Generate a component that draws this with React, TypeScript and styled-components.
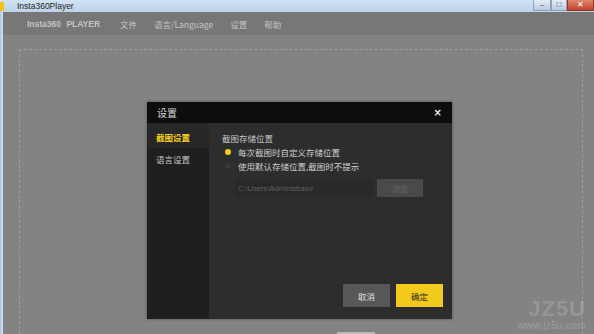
import React from "react";
import styled, { createGlobalStyle } from "styled-components";

const Global = createGlobalStyle`
  html, body { margin: 0; padding: 0; background: #838383; }
  body { font-family: "Noto Sans CJK SC", "Liberation Sans", sans-serif; }
  * { box-sizing: border-box; }
`;

const Screen = styled.div`
  width: 594px;
  height: 334px;
  display: flex;
  flex-direction: column;
  overflow: hidden;
  position: relative;
  background: #838383;
`;

const TitleBar = styled.div`
  height: 12px;
  display: flex;
  align-items: center;
  background: linear-gradient(#d3e3f3, #bcd2ea);
  font-family: "Liberation Sans", sans-serif;
  font-size: 8.5px;
  color: #1d1d1d;
`;

const AppIcon = styled.div`
  width: 4px;
  height: 9px;
  background: #f3c417;
  margin-right: 13px;
`;

const TitleText = styled.span`
  flex: 1;
  line-height: 12px;
`;

const WinBtn = styled.div<{ $close?: boolean; $w: number }>`
  width: ${(p) => p.$w}px;
  height: 11px;
  align-self: flex-start;
  background: ${(p) => (p.$close ? "linear-gradient(#e0866f, #c2432f)" : "linear-gradient(#e5edf6, #b9cbe0)")};
  border: 1px solid ${(p) => (p.$close ? "#9a3526" : "#8ea2bb")};
  border-top: none;
  display: flex;
  align-items: center;
  justify-content: center;
  color: ${(p) => (p.$close ? "#fff" : "#445")};
  font-size: 8px;
  line-height: 1;
`;

const Frame = styled.div`
  flex: 1;
  display: flex;
`;

const WinBorder = styled.div`
  width: 3px;
  background: linear-gradient(90deg, #a9c4e2, #d6e5f4);
`;

const AppArea = styled.div`
  flex: 1;
  display: flex;
  flex-direction: column;
`;

const MenuBar = styled.div`
  height: 23px;
  background: #777777;
  display: flex;
  align-items: center;
  padding-left: 24px;
  color: #c4c4c4;
  font-size: 8.5px;
`;

const Brand = styled.span`
  font-family: "Liberation Sans", sans-serif;
  font-weight: bold;
  margin-right: 20px;
  word-spacing: 3px;
`;

const MenuItem = styled.span`
  margin-right: 17px;
`;

const Stage = styled.div`
  flex: 1;
  padding: 14px 11px 0 16px;
  display: flex;
  background: #838383;
`;

const DashedArea = styled.div`
  flex: 1;
  border: 1px dashed #9d9d9d;
  border-bottom: none;
`;

const BottomTab = styled.div`
  position: absolute;
  left: 337px;
  bottom: 0;
  width: 38px;
  height: 2px;
  background: #b8b8b8;
`;

const Modal = styled.div`
  position: absolute;
  left: 147px;
  top: 102px;
  width: 305px;
  height: 217px;
  display: flex;
  flex-direction: column;
  background: #2d2d2e;
  box-shadow: 0 0 3px rgba(0, 0, 0, 0.4);
`;

const ModalHeader = styled.div`
  height: 21px;
  background: #0d0d0d;
  display: flex;
  align-items: center;
  justify-content: space-between;
  padding: 0 10px 0 10px;
  color: #d8d8d8;
  font-size: 10px;
`;

const CloseX = styled.span`
  color: #f0f0f0;
  font-family: "DejaVu Sans", sans-serif;
  font-weight: bold;
  font-size: 10px;
`;

const ModalBody = styled.div`
  flex: 1;
  display: flex;
`;

const Sidebar = styled.div`
  width: 62px;
  background: #1f1f1f;
  display: flex;
  flex-direction: column;
`;

const SideItem = styled.div<{ $active?: boolean }>`
  height: ${(p) => (p.$active ? 25 : 22)}px;
  display: flex;
  align-items: center;
  padding-left: 9px;
  padding-top: ${(p) => (p.$active ? 2 : 0)}px;
  font-size: 8.5px;
  background: ${(p) => (p.$active ? "#272727" : "transparent")};
  color: ${(p) => (p.$active ? "#f3cf1f" : "#c8c8c8")};
  font-weight: ${(p) => (p.$active ? "bold" : "normal")};
`;

const Main = styled.div`
  flex: 1;
  display: flex;
  flex-direction: column;
  padding: 9px 18px 12px 13px;
`;

const SectionLabel = styled.div`
  font-size: 8.5px;
  color: #c8c8c8;
  line-height: 12px;
  margin-bottom: 1px;
`;

const RadioRow = styled.div`
  display: flex;
  align-items: center;
  height: 14px;
  padding-left: 3px;
  font-size: 8.5px;
  color: #cfcfcf;
`;

const Dot = styled.span<{ $on?: boolean }>`
  width: 6px;
  height: 6px;
  border-radius: 50%;
  background: ${(p) => (p.$on ? "#f3cf1f" : "#373737")};
  margin-right: 7px;
`;

const PathRow = styled.div`
  display: flex;
  gap: 3px;
  margin-top: 6px;
  margin-left: 13px;
  height: 18px;
`;

const PathInput = styled.div`
  width: 139px;
  background: #292929;
  color: #5f5f5f;
  font-family: "Liberation Sans", sans-serif;
  font-size: 7.5px;
  display: flex;
  align-items: center;
  padding-left: 3px;
`;

const Browse = styled.div`
  width: 46px;
  background: #4a4a4a;
  color: #666;
  font-size: 8px;
  display: flex;
  align-items: center;
  justify-content: center;
`;

const Footer = styled.div`
  margin-top: auto;
  display: flex;
  justify-content: flex-end;
  gap: 6px;
  margin-right: -9px;
`;

const Btn = styled.div<{ $primary?: boolean }>`
  width: 47px;
  height: 23px;
  display: flex;
  align-items: center;
  justify-content: center;
  font-size: 8.5px;
  background: ${(p) => (p.$primary ? "#f2c91d" : "#575757")};
  color: ${(p) => (p.$primary ? "#2a2a2a" : "#e0e0e0")};
`;

const Watermark = styled.div`
  position: absolute;
  right: 8px;
  bottom: 3px;
  display: flex;
  flex-direction: column;
  align-items: flex-end;
  gap: 1px;
  color: rgba(200, 200, 200, 0.28);
  font-family: "Liberation Sans", sans-serif;
  line-height: 1;
  pointer-events: none;
`;

const WmBig = styled.span`
  font-size: 22px;
  font-weight: bold;
  letter-spacing: 1px;
`;

const WmSmall = styled.span`
  font-size: 10px;
  font-weight: bold;
`;

export default function App() {
  return (
    <>
      <Global />
      <Screen>
        <TitleBar>
          <AppIcon />
          <TitleText>Insta360Player</TitleText>
          <WinBtn $w={18}>–</WinBtn>
          <WinBtn $w={16}>□</WinBtn>
          <WinBtn $w={27} $close>
            ✕
          </WinBtn>
        </TitleBar>
        <Frame>
          <WinBorder />
          <AppArea>
            <MenuBar>
              <Brand>Insta360 PLAYER</Brand>
              <MenuItem>文件</MenuItem>
              <MenuItem>语言/Language</MenuItem>
              <MenuItem>设置</MenuItem>
              <MenuItem>帮助</MenuItem>
            </MenuBar>
            <Stage>
              <DashedArea />
            </Stage>
          </AppArea>
        </Frame>
        <BottomTab />
        <Modal>
          <ModalHeader>
            <span>设置</span>
            <CloseX>×</CloseX>
          </ModalHeader>
          <ModalBody>
            <Sidebar>
              <SideItem $active>截图设置</SideItem>
              <SideItem>语言设置</SideItem>
            </Sidebar>
            <Main>
              <SectionLabel>截图存储位置</SectionLabel>
              <RadioRow>
                <Dot $on />
                每次截图时自定义存储位置
              </RadioRow>
              <RadioRow>
                <Dot />
                使用默认存储位置,截图时不提示
              </RadioRow>
              <PathRow>
                <PathInput>C:\Users\Administrator</PathInput>
                <Browse>浏览</Browse>
              </PathRow>
              <Footer>
                <Btn>取消</Btn>
                <Btn $primary>确定</Btn>
              </Footer>
            </Main>
          </ModalBody>
        </Modal>
        <Watermark>
          <WmBig>JZ5U</WmBig>
          <WmSmall>www.jz5u.com</WmSmall>
        </Watermark>
      </Screen>
    </>
  );
}
